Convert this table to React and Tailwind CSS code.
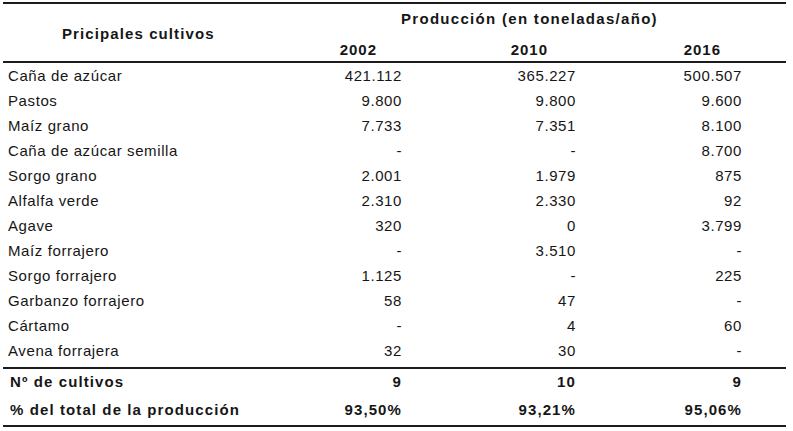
const rows = [
  ["Caña de azúcar", "421.112", "365.227", "500.507"],
  ["Pastos", "9.800", "9.800", "9.600"],
  ["Maíz grano", "7.733", "7.351", "8.100"],
  ["Caña de azúcar semilla", "-", "-", "8.700"],
  ["Sorgo grano", "2.001", "1.979", "875"],
  ["Alfalfa verde", "2.310", "2.330", "92"],
  ["Agave", "320", "0", "3.799"],
  ["Maíz forrajero", "-", "3.510", "-"],
  ["Sorgo forrajero", "1.125", "-", "225"],
  ["Garbanzo forrajero", "58", "47", "-"],
  ["Cártamo", "-", "4", "60"],
  ["Avena forrajera", "32", "30", "-"],
];

const cols = "grid grid-cols-[313px_86px_174px_166px_44px]";

const App = () => {
  return (
    <div className="w-[793px] h-[431px] bg-white text-[#161616] font-['Liberation_Sans',Arial,sans-serif] text-[15px] leading-[18px] pt-[2px] pl-[3px]">
      <div className="w-[783px] border-y-2 border-[#1c1c1c]">
        {/* header */}
        <div className={`${cols} border-b-2 border-[#1c1c1c] h-[59px] pt-[2px] font-bold tracking-[1px]`}>
          <div className="row-span-2 flex items-center pl-[59px] tracking-[1.1px]">
            Pricipales cultivos
          </div>
          <div className="col-span-4 h-[26px] flex items-center pl-[85px] tracking-[1.3px]">
            Producción (en toneladas/año)
          </div>
          <div className="text-right pr-[25px] pt-[6px]">2002</div>
          <div className="text-right pr-[28px] pt-[6px]">2010</div>
          <div className="text-right pr-[21px] pt-[6px]">2016</div>
          <div></div>
        </div>

        {/* body */}
        <div className="tracking-[0.6px]">
          {rows.map((r) => (
            <div key={r[0]} className={`${cols} h-[25px] items-center`}>
              <div className="pl-[5px]">{r[0]}</div>
              <div className="text-right whitespace-nowrap">{r[1]}</div>
              <div className="text-right whitespace-nowrap">{r[2]}</div>
              <div className="text-right whitespace-nowrap">{r[3]}</div>
              <div></div>
            </div>
          ))}
        </div>

        {/* totals */}
        <div className="mt-[4px] border-t-2 border-[#1c1c1c] font-bold tracking-[1.1px]">
          <div className={`${cols} h-[25px] items-center`}>
            <div className="pl-[7px]">Nº de cultivos</div>
            <div className="text-right">9</div>
            <div className="text-right">10</div>
            <div className="text-right">9</div>
            <div></div>
          </div>
          <div className={`${cols} h-[31px] items-center`}>
            <div className="pl-[7px] whitespace-nowrap">% del total de la producción</div>
            <div className="text-right">93,50%</div>
            <div className="text-right">93,21%</div>
            <div className="text-right">95,06%</div>
            <div></div>
          </div>
        </div>
      </div>
    </div>
  );
};

export default App;
